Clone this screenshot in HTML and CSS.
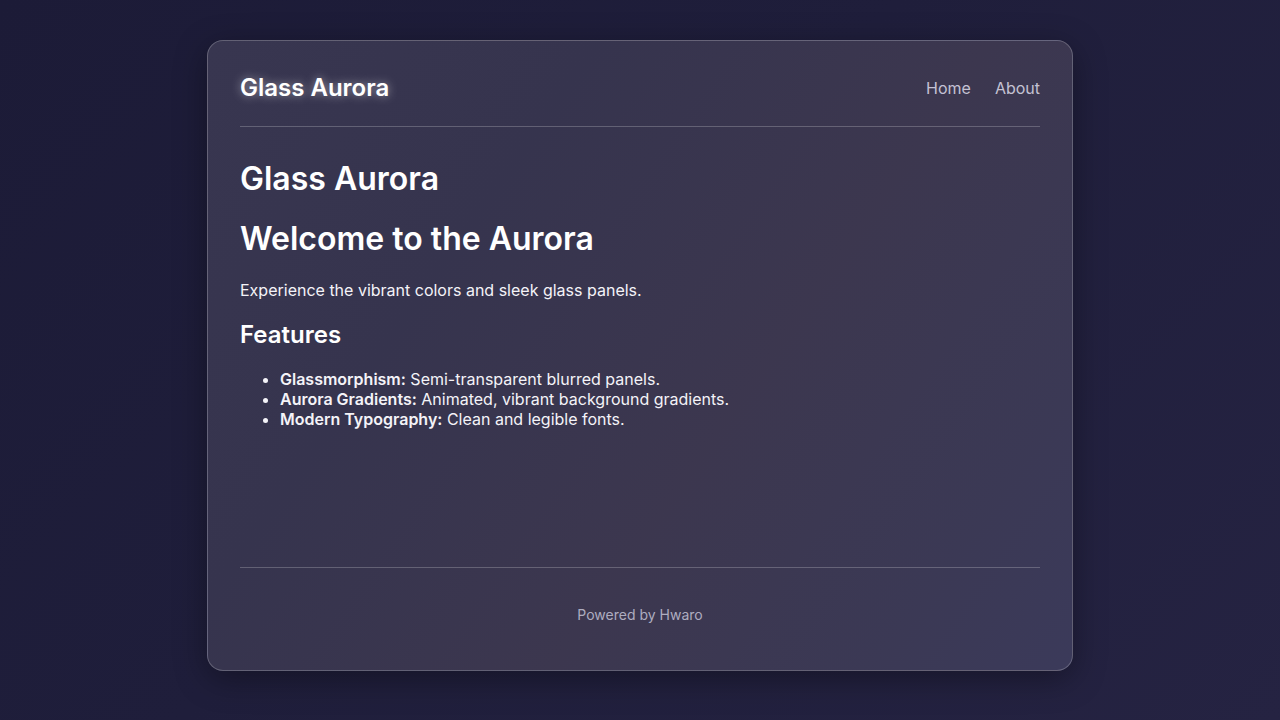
FILE: index.html
```html
<!DOCTYPE html>
<html lang="en">
<head>
<meta charset="utf-8">
<title>Glass Aurora</title>
<link rel="stylesheet" href="styles.css">
</head>
<body>
<div class="panel">
  <header class="site-header">
    <div class="brand">Glass Aurora</div>
    <nav class="nav">
      <a href="#">Home</a>
      <a href="#">About</a>
    </nav>
  </header>
  <main class="content">
    <h1>Glass Aurora</h1>
    <h2>Welcome to the Aurora</h2>
    <p>Experience the vibrant colors and sleek glass panels.</p>
    <h3>Features</h3>
    <ul>
      <li><strong>Glassmorphism:</strong> Semi-transparent blurred panels.</li>
      <li><strong>Aurora Gradients:</strong> Animated, vibrant background gradients.</li>
      <li><strong>Modern Typography:</strong> Clean and legible fonts.</li>
    </ul>
  </main>
  <footer class="site-footer">Powered by Hwaro</footer>
</div>
</body>
</html>
```

FILE: styles.css
```css
html, body {
  margin: 0;
  height: 100%;
}
body {
  font-family: Inter, "Noto Sans", sans-serif;
  color: #f4f3f8;
  background: linear-gradient(135deg, #1c1b37 0%, #1f1e3b 45%, #252342 100%);
  padding: 40px 0 49px;
  box-sizing: border-box;
}
.panel {
  box-sizing: border-box;
  width: 866px;
  height: 631px;
  margin: 0 auto;
  padding: 32px 32px 32px;
  border: 1px solid rgba(255, 255, 255, 0.22);
  border-radius: 16px;
  background: linear-gradient(125deg, #383650 0%, #36344e 30%, #3c374f 60%, #3b3955 85%, #3b3a5a 100%);
  box-shadow: 0 8px 32px rgba(0, 0, 0, 0.35);
  display: flex;
  flex-direction: column;
}
.site-header {
  display: flex;
  justify-content: space-between;
  align-items: center;
  padding-bottom: 23px;
  border-bottom: 1px solid rgba(255, 255, 255, 0.22);
}
.brand {
  font-size: 24px;
  line-height: 30px;
  font-weight: 600;
  color: #ffffff;
  text-shadow: 0 0 10px rgba(255, 255, 255, 0.5);
}
.nav {
  display: flex;
  gap: 24px;
}
.nav a {
  color: #c4c2d3;
  text-decoration: none;
  font-size: 16px;
  line-height: 20px;
}
.content {
  flex: 1;
}
.content h1 {
  font-size: 32px;
  line-height: 39px;
  font-weight: 600;
  color: #ffffff;
  margin: 32px 0 21px;
}
.content h2 {
  font-size: 32px;
  line-height: 39px;
  font-weight: 600;
  color: #ffffff;
  margin: 0 0 23px;
}
.content p {
  font-size: 16px;
  line-height: 19px;
  margin: 0 0 20px;
}
.content h3 {
  font-size: 24px;
  line-height: 29px;
  font-weight: 600;
  color: #ffffff;
  margin: 0 0 20px;
}
.content ul {
  margin: 0;
  padding-left: 40px;
  font-size: 16px;
  line-height: 20px;
}
.content strong {
  font-weight: 600;
}
.site-footer {
  border-top: 1px solid rgba(255, 255, 255, 0.22);
  padding: 38px 0 14px;
  text-align: center;
  font-size: 14px;
  line-height: 18px;
  color: #aeadc0;
}
```
